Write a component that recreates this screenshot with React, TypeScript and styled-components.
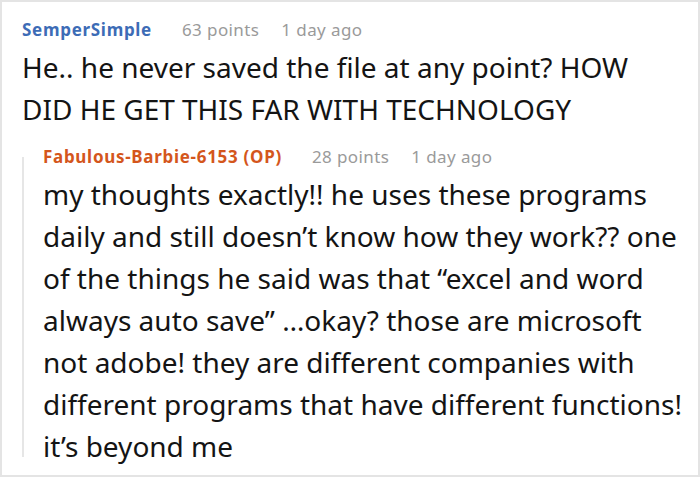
import React from "react";
import styled, { createGlobalStyle } from "styled-components";

const Global = createGlobalStyle`
  html, body { margin: 0; padding: 0; background: #ffffff; }
  body { font-family: "Noto Sans", "Open Sans", sans-serif; }
`;

const Frame = styled.div`
  box-sizing: border-box;
  width: 700px;
  height: 477px;
  border: 2px solid #e4e4e4;
  padding: 15px 12px 0 20px;
  overflow: hidden;
  background: #fff;
`;

const Comment = styled.div`
  display: flex;
  flex-direction: column;
`;

const Header = styled.div`
  display: flex;
  align-items: baseline;
  gap: 22px;
  height: 26px;
  line-height: 26px;
  font-size: 17px;
  letter-spacing: 0.4px;
  margin-bottom: 3px;
  white-space: nowrap;
`;

const Author = styled.span<{ $op?: boolean }>`
  font-weight: 700;
  letter-spacing: 0.7px;
  margin-right: 8px;
  color: ${(p) => (p.$op ? "#d4561c" : "#3d6cb6")};
`;

const Meta = styled.span`
  color: #9a9a9a;
  font-weight: 400;
`;

const Body = styled.p<{ $maxWidth?: number }>`
  margin: 0;
  font-size: 28px;
  line-height: 42px;
  color: #141414;
  max-width: ${(p) => (p.$maxWidth ? `${p.$maxWidth}px` : "none")};
`;

const Reply = styled.div`
  display: flex;
  margin-top: 14px;
`;

const ThreadLine = styled.div`
  width: 2px;
  background: #e6e6e6;
  margin-top: 13px;
  margin-bottom: 10px;
  flex: none;
`;

const ReplyContent = styled.div`
  padding-left: 19px;
  display: flex;
  flex-direction: column;
`;

export default function App() {
  return (
    <>
      <Global />
      <Frame>
        <Comment>
          <Header>
            <Author>SemperSimple</Author>
            <Meta>63 points</Meta>
            <Meta>1 day ago</Meta>
          </Header>
          <Body $maxWidth={640}>
            He.. he never saved the file at any point? HOW DID HE GET THIS FAR WITH TECHNOLOGY
          </Body>
          <Reply>
            <ThreadLine />
            <ReplyContent>
              <Header>
                <Author $op>Fabulous-Barbie-6153 (OP)</Author>
                <Meta>28 points</Meta>
                <Meta>1 day ago</Meta>
              </Header>
              <Body>
                my thoughts exactly!! he uses these programs daily and still doesn’t know how they
                work?? one of the things he said was that “excel and word always auto save” …okay?
                those are microsoft not adobe! they are different companies with different programs
                that have different functions! it’s beyond me
              </Body>
            </ReplyContent>
          </Reply>
        </Comment>
      </Frame>
    </>
  );
}
